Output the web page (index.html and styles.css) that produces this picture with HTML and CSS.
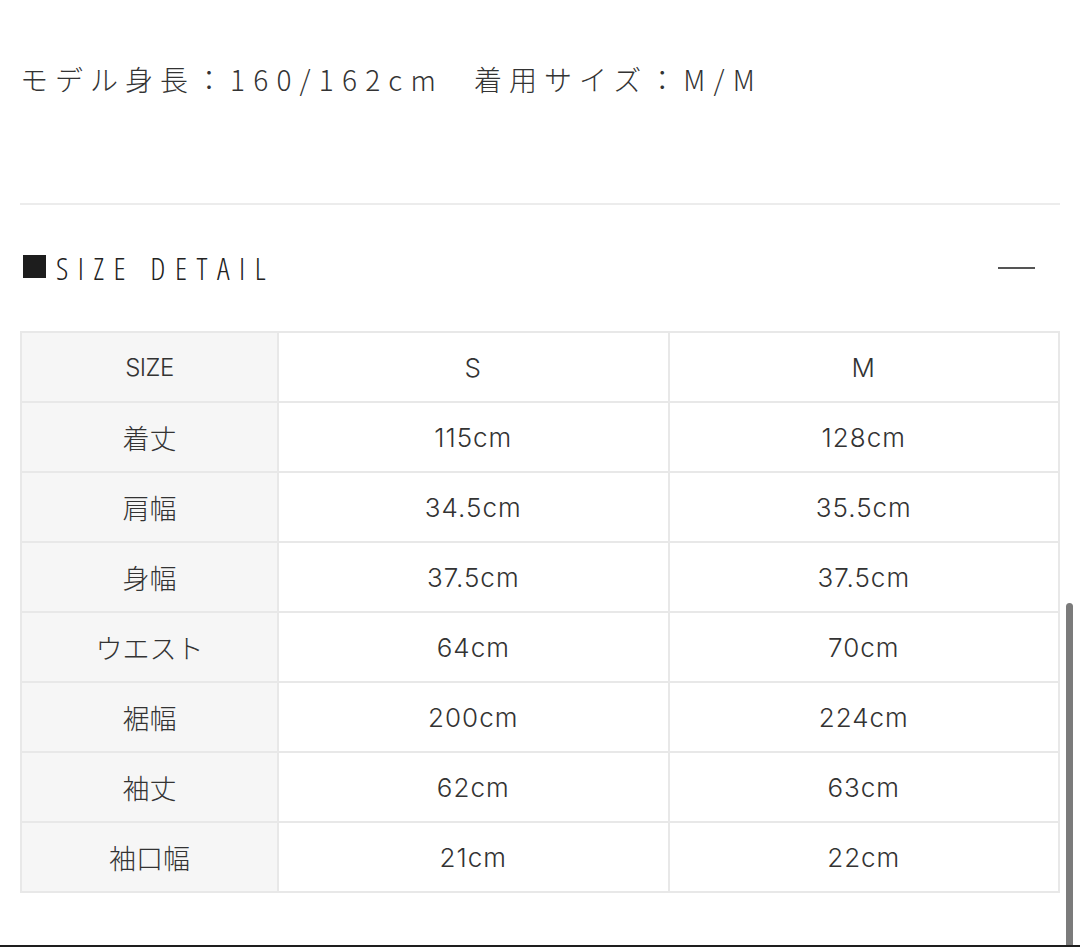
FILE: index.html
```html
<!DOCTYPE html>
<html lang="ja">
<head>
<meta charset="utf-8">
<link rel="stylesheet" href="styles.css">
</head>
<body>
<div class="page">
  <p class="model"><span>モデル身長：</span><span class="lat">160/162cm</span><span class="gap">着用サイズ：</span><span class="lat">M/M</span></p>
  <hr class="divider">
  <div class="section-head">
    <h2 class="title"><span class="square"></span>SIZE DETAIL</h2>
    <span class="minus"></span>
  </div>
  <table class="size-table">
    <tr><th class="latin">SIZE</th><td>S</td><td>M</td></tr>
    <tr><th>着丈</th><td>115cm</td><td>128cm</td></tr>
    <tr><th>肩幅</th><td>34.5cm</td><td>35.5cm</td></tr>
    <tr><th>身幅</th><td>37.5cm</td><td>37.5cm</td></tr>
    <tr><th>ウエスト</th><td>64cm</td><td>70cm</td></tr>
    <tr><th>裾幅</th><td>200cm</td><td>224cm</td></tr>
    <tr><th>袖丈</th><td>62cm</td><td>63cm</td></tr>
    <tr><th>袖口幅</th><td>21cm</td><td>22cm</td></tr>
  </table>
</div>
<div class="scrollbar"></div>
<div class="bottom-line"></div>
</body>
</html>
```

FILE: styles.css
```css
html, body {
  margin: 0;
  padding: 0;
  background: #ffffff;
  height: 947px;
  overflow: hidden;
}
body {
  position: relative;
  font-family: "Noto Sans CJK JP", sans-serif;
  color: #333333;
}
.page {
  padding: 0 20px;
}
.model {
  margin: 0;
  padding-top: 59px;
  font-family: "Noto Sans CJK JP", sans-serif;
  font-size: 28px;
  line-height: 40px;
  letter-spacing: 7px;
  color: #333;
  font-weight: 300;
}
.model .lat {
  letter-spacing: 8.2px;
}
.model .gap {
  margin-left: 30px;
}
.divider {
  margin: 104px 0 0 0;
  border: 0;
  height: 2px;
  background: #ececec;
}
.section-head {
  display: flex;
  align-items: center;
  justify-content: space-between;
  height: 126px;
}
.title {
  margin: 0;
  display: flex;
  align-items: center;
  font-family: "Open Sans", sans-serif;
  font-weight: 300;
  font-stretch: 75%;
  font-size: 31px;
  letter-spacing: 9.5px;
  color: #222;
  padding-left: 3px;
}
.square {
  display: inline-block;
  width: 23px;
  height: 23px;
  background: #1d1d1d;
  margin-right: 10px;
  position: relative;
  top: -2px;
}
.minus {
  display: block;
  width: 37px;
  height: 2px;
  background: #555;
  margin-right: 25px;
}
.size-table {
  width: 100%;
  border-collapse: collapse;
  border: 2px solid #e8e8e8;
  table-layout: fixed;
}
.size-table th,
.size-table td {
  border: 2px solid #e8e8e8;
  height: 68px;
  padding: 0;
  text-align: center;
  font-family: "Inter", "Noto Sans CJK JP", sans-serif;
  font-weight: 300;
  color: #333;
}
.size-table td {
  background: #ffffff;
  font-size: 26px;
  letter-spacing: 1px;
}
.size-table th {
  width: 255px;
  background: #f6f6f6;
  font-size: 27px;
}
.size-table th.latin {
  font-size: 24px;
  letter-spacing: -0.5px;
}
.scrollbar {
  position: absolute;
  left: 1066px;
  top: 603px;
  width: 7px;
  height: 344px;
  background: #7b7b7b;
  border-radius: 4px 4px 0 0;
}
.bottom-line {
  position: absolute;
  left: 0;
  bottom: 0;
  width: 100%;
  height: 2px;
  background: #1e1e1e;
}
```
